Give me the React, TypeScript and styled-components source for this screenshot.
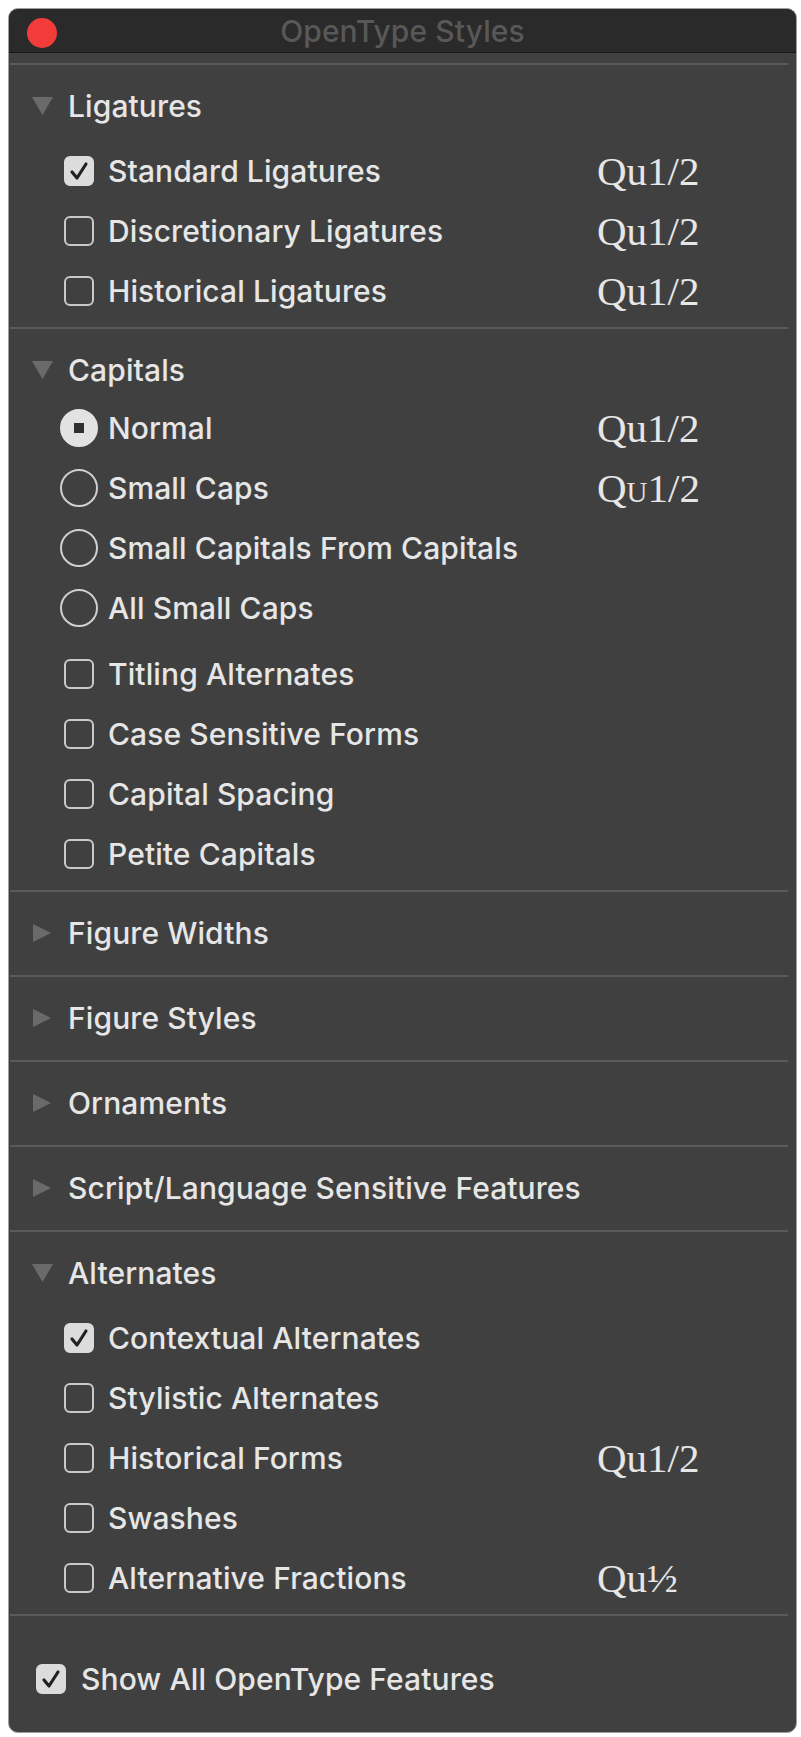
import React from 'react';
import styled, { createGlobalStyle } from 'styled-components';

const GlobalStyle = createGlobalStyle`
  body {
    margin: 0;
    background: #ffffff;
    font-family: 'Inter', 'Liberation Sans', sans-serif;
  }
`;

const Window = styled.div`
  margin: 8px 0 0 8px;
  width: 789px;
  height: 1725px;
  box-sizing: border-box;
  border: 1px solid #9e9e9e;
  border-radius: 10px;
  background: #404040;
  overflow: hidden;
  display: flex;
  flex-direction: column;
`;

const TitleBar = styled.div`
  height: 43px;
  flex-shrink: 0;
  background: #2a2a2a;
  border-bottom: 1px solid #171717;
  display: grid;
  grid-template-columns: 1fr auto 1fr;
  align-items: center;
  padding: 0 18px;
`;

const CloseButton = styled.div`
  width: 30px;
  height: 30px;
  margin-top: 4px;
  border-radius: 50%;
  background: #f23c39;
`;

const Title = styled.div`
  color: #585858;
  font-size: 30px;
  font-weight: 500;
  letter-spacing: 0.1px;
`;

const Content = styled.div`
  flex: 1;
  padding-top: 10px;
  display: flex;
  flex-direction: column;
`;

const Section = styled.div<{ $open: boolean }>`
  margin: 0 8px 0 1px;
  border-top: 2px solid #5a5a5a;
  padding-bottom: ${(p) => (p.$open ? '6px' : '0')};
`;

const Header = styled.div<{ $open: boolean }>`
  height: 40px;
  margin-top: 21px;
  margin-bottom: ${(p) => (p.$open ? '0' : '22px')};
  padding-left: 22px;
  display: flex;
  align-items: center;
  gap: 15px;
  color: #e6e6e6;
  font-size: 30px;
  font-weight: 500;
  letter-spacing: 0.1px;
`;

const Disclosure = styled.svg`
  width: 21px;
  height: 20px;
  flex-shrink: 0;
`;

const List = styled.div`
  margin-top: 15px;
`;

const RadioGroup = styled.div`
  margin: -7px 0 6px;
`;

const Row = styled.div`
  height: 60px;
  display: flex;
  align-items: center;
  padding: 0 21px 0 49px;
`;

const ControlSlot = styled.div`
  width: 40px;
  display: flex;
  justify-content: center;
  flex-shrink: 0;
  margin-right: 9px;
`;

const Box = styled.div<{ $checked?: boolean }>`
  width: 30px;
  height: 30px;
  box-sizing: border-box;
  border-radius: 6px;
  border: 2px solid ${(p) => (p.$checked ? '#dcdcdc' : '#c9c9c9')};
  background: ${(p) => (p.$checked ? '#dcdcdc' : 'transparent')};
  display: flex;
  align-items: center;
  justify-content: center;
`;

const Radio = styled.div<{ $checked?: boolean }>`
  width: 38px;
  height: 38px;
  box-sizing: border-box;
  border-radius: 50%;
  border: 2px solid ${(p) => (p.$checked ? '#e2e2e2' : '#cfcfcf')};
  background: ${(p) => (p.$checked ? '#e2e2e2' : 'transparent')};
  display: flex;
  align-items: center;
  justify-content: center;
`;

const RadioDot = styled.div`
  width: 10px;
  height: 10px;
  background: #303030;
`;

const Label = styled.div`
  flex: 1;
  color: #e6e6e6;
  font-size: 30px;
  font-weight: 500;
  letter-spacing: 0.1px;
  white-space: nowrap;
`;

const Sample = styled.div`
  width: 170px;
  font-family: 'Liberation Serif', 'DejaVu Serif', serif;
  font-size: 41px;
  line-height: 1;
  color: #e6e6e6;
  white-space: nowrap;
`;

const SmallCap = styled.span`
  font-variant-caps: small-caps;
`;

const Footer = styled.div`
  margin: 0 8px 0 1px;
  border-top: 2px solid #5a5a5a;
  padding: 47px 0 0 26px;
`;

const FooterRow = styled.div`
  height: 32px;
  display: flex;
  align-items: center;
  gap: 15px;
`;

const Check = () => (
  <svg width="22" height="22" viewBox="0 0 22 22">
    <path d="M4 12 L9 18 L18 4" fill="none" stroke="#222222" strokeWidth="3.2" strokeLinecap="round" strokeLinejoin="round" />
  </svg>
);

const Triangle = ({ open }: { open: boolean }) => (
  <Disclosure viewBox="0 0 21 20">
    {open ? <polygon points="0,1 21,1 10.5,19" fill="#6a6a6a" /> : <polygon points="1,1 19,10 1,19" fill="#6a6a6a" />}
  </Disclosure>
);

type Item = { label: string; checked?: boolean; sample?: React.ReactNode };

const CheckRow = ({ label, checked, sample }: Item) => (
  <Row>
    <ControlSlot>
      <Box $checked={checked}>{checked && <Check />}</Box>
    </ControlSlot>
    <Label>{label}</Label>
    {sample && <Sample>{sample}</Sample>}
  </Row>
);

const RadioRow = ({ label, checked, sample }: Item) => (
  <Row>
    <ControlSlot>
      <Radio $checked={checked}>{checked && <RadioDot />}</Radio>
    </ControlSlot>
    <Label>{label}</Label>
    {sample && <Sample>{sample}</Sample>}
  </Row>
);

const CollapsedSection = ({ title }: { title: string }) => (
  <Section $open={false}>
    <Header $open={false}>
      <Triangle open={false} />
      {title}
    </Header>
  </Section>
);

const ligatures: Item[] = [
  { label: 'Standard Ligatures', checked: true, sample: 'Qu1/2' },
  { label: 'Discretionary Ligatures', sample: 'Qu1/2' },
  { label: 'Historical Ligatures', sample: 'Qu1/2' },
];

const capitalRadios: Item[] = [
  { label: 'Normal', checked: true, sample: 'Qu1/2' },
  { label: 'Small Caps', sample: <>Q<SmallCap>u</SmallCap>1/2</> },
  { label: 'Small Capitals From Capitals' },
  { label: 'All Small Caps' },
];

const capitalChecks: Item[] = [
  { label: 'Titling Alternates' },
  { label: 'Case Sensitive Forms' },
  { label: 'Capital Spacing' },
  { label: 'Petite Capitals' },
];

const alternates: Item[] = [
  { label: 'Contextual Alternates', checked: true },
  { label: 'Stylistic Alternates' },
  { label: 'Historical Forms', sample: 'Qu1/2' },
  { label: 'Swashes' },
  { label: 'Alternative Fractions', sample: 'Qu½' },
];

const App = () => {
  return (
    <>
      <GlobalStyle />
      <Window>
        <TitleBar>
          <CloseButton />
          <Title>OpenType Styles</Title>
          <div />
        </TitleBar>
        <Content>
          <Section $open>
            <Header $open>
              <Triangle open />
              Ligatures
            </Header>
            <List>
              {ligatures.map((it) => (
                <CheckRow key={it.label} {...it} />
              ))}
            </List>
          </Section>

          <Section $open>
            <Header $open>
              <Triangle open />
              Capitals
            </Header>
            <List>
              <RadioGroup>
                {capitalRadios.map((it) => (
                  <RadioRow key={it.label} {...it} />
                ))}
              </RadioGroup>
              {capitalChecks.map((it) => (
                <CheckRow key={it.label} {...it} />
              ))}
            </List>
          </Section>

          <CollapsedSection title="Figure Widths" />
          <CollapsedSection title="Figure Styles" />
          <CollapsedSection title="Ornaments" />
          <CollapsedSection title="Script/Language Sensitive Features" />

          <Section $open>
            <Header $open>
              <Triangle open />
              Alternates
            </Header>
            <List>
              {alternates.map((it) => (
                <CheckRow key={it.label} {...it} />
              ))}
            </List>
          </Section>

          <Footer>
            <FooterRow>
              <Box $checked>
                <Check />
              </Box>
              <Label>Show All OpenType Features</Label>
            </FooterRow>
          </Footer>
        </Content>
      </Window>
    </>
  );
};

export default App;
